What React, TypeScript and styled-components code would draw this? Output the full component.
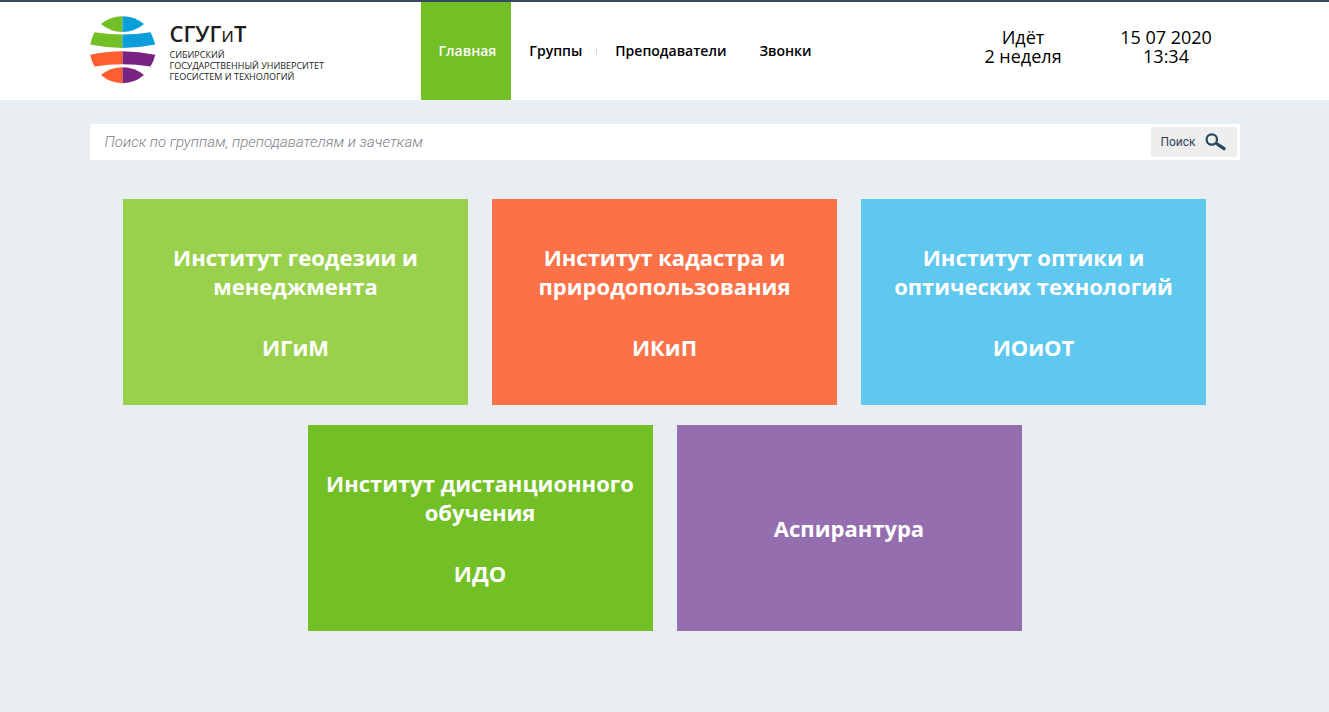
import React from 'react';
import styled, { createGlobalStyle } from 'styled-components';

const GlobalStyle = createGlobalStyle`
  *, *::before, *::after { box-sizing: border-box; }
  html { min-height: 100%; background: #e9eef2; }
  body {
    margin: 0;
    background: #e9eef2;
    color: #000;
    font-family: 'Open Sans', 'Noto Sans', sans-serif;
  }
`;

const Container = styled.div`
  width: 100%;
  max-width: 1150px;
  margin: 0 auto;
`;

const Header = styled.header`
  background: #fff;
  border-top: 2px solid #34495e;
`;

const HeaderRow = styled(Container)`
  display: flex;
  align-items: stretch;
  flex-wrap: wrap;
  min-height: 98px;
`;

const Brand = styled.a`
  display: flex;
  align-items: center;
  gap: 14px;
  width: 331px;
  padding-bottom: 2px;
  color: #1d1d1b;
  text-decoration: none;
`;

const BrandText = styled.span`
  display: flex;
  flex-direction: column;
`;

const BrandName = styled.span`
  font-size: 22px;
  line-height: 28px;
  font-weight: 600;
`;

const SmallLetter = styled.span`
  font-size: 20px;
  font-weight: 400;
`;

const BrandLine = styled.span`
  font-size: 9px;
  line-height: 11px;
  font-weight: 500;
  white-space: nowrap;
`;

const Nav = styled.nav`
  display: flex;
  align-items: stretch;
`;

const NavLink = styled.a<{ $active?: boolean; $divided?: boolean }>`
  display: flex;
  align-items: center;
  padding: 0 15px 0 18px;
  font-size: 14px;
  line-height: 20px;
  font-weight: 600;
  color: ${(p) => (p.$active ? '#fff' : '#000')};
  background: ${(p) => (p.$active ? '#72bf26' : 'transparent')};
  background-image: ${(p) =>
    p.$divided ? 'repeating-linear-gradient(#a8a8a8 0 1px, transparent 1px 2px)' : 'none'};
  background-size: 1px 5px;
  background-repeat: no-repeat;
  background-position: right center;
  text-decoration: none;
`;

const Status = styled.div`
  display: flex;
  align-items: center;
  margin-left: auto;
  padding: 0 2px 8px 0;
`;

const StatusItem = styled.p`
  width: 143px;
  margin: 0;
  text-align: center;
  font-size: 18px;
  line-height: 19px;
`;

const SearchForm = styled.form`
  display: flex;
  margin-top: 24px;
  padding: 3px;
  background: #fff;
`;

const SearchInput = styled.input`
  flex: 1;
  min-width: 0;
  height: 30px;
  padding: 0 12px;
  border: 0;
  outline: 0;
  background: transparent;
  font: 15px Roboto, sans-serif;
  color: #34495e;

  &::placeholder {
    font-style: italic;
    font-weight: 300;
    color: #7c8088;
    opacity: 1;
  }
`;

const SearchButton = styled.button`
  display: flex;
  align-items: center;
  justify-content: center;
  gap: 9px;
  width: 86px;
  height: 30px;
  padding: 0;
  border: 0;
  border-radius: 2px;
  background: #eeeeef;
  color: #34405e;
  font: 12px Roboto, sans-serif;
  cursor: pointer;
`;

const Tiles = styled.main`
  display: flex;
  flex-wrap: wrap;
  justify-content: center;
  gap: 20px 24px;
  padding: 39px 0;
`;

const Tile = styled.a<{ $color: string }>`
  display: flex;
  flex-direction: column;
  align-items: center;
  justify-content: center;
  gap: 32px;
  width: 345px;
  min-height: 206px;
  padding: 0 16px;
  background: ${(p) => p.$color};
  color: #fff;
  font-size: 22px;
  line-height: 29px;
  font-weight: 700;
  text-align: center;
  text-decoration: none;
`;

const Emblem = () => (
  <svg width="66" height="68" viewBox="0 0 66 68" aria-hidden="true">
    <defs>
      <clipPath id="west">
        <rect x="0" y="0" width="32.5" height="68" />
      </clipPath>
      <clipPath id="east">
        <rect x="32.5" y="0" width="33.5" height="68" />
      </clipPath>
      <g id="north">
        <path d="M11 8Q20 .5 32.5 .2Q45 .5 54 8Q45 15.8 32.5 16Q20 15.8 11 8Z" />
        <path d="M4.5 16.2Q32.5 21 60.5 16.2Q63.5 22 65.3 28.5Q49 31.9 32.5 31.9Q16 31.9 .2 28.5Q1.5 22 4.5 16.2Z" />
      </g>
      <g id="south">
        <path d="M.2 38.8Q16 35.2 32.5 35.2Q49 35.2 65.3 38.8Q64 45 60.5 50.6Q32.5 46 4.5 50.6Q1.5 45 .2 38.8Z" />
        <path d="M11 59Q20 51.3 32.5 51.2Q45 51.3 54 59Q45 67 32.5 67.2Q20 67 11 59Z" />
      </g>
    </defs>
    <use href="#north" fill="#72bf26" clipPath="url(#west)" />
    <use href="#north" fill="#0a9edb" clipPath="url(#east)" />
    <use href="#south" fill="#ff5e2e" clipPath="url(#west)" />
    <use href="#south" fill="#7b2382" clipPath="url(#east)" />
  </svg>
);

const Magnifier = () => (
  <svg width="22" height="18" viewBox="0 0 22 18" fill="none" stroke="#24475f" aria-hidden="true">
    <circle cx="6.8" cy="6.5" r="5.2" strokeWidth="2.2" />
    <path d="M10.8 10L14 12.2" strokeWidth="2.4" />
    <path d="M13 11.7L19 15.7" strokeWidth="3.2" strokeLinecap="round" />
  </svg>
);

const institutes = [
  { name: 'Институт геодезии и менеджмента', short: 'ИГиМ', color: '#99d14d' },
  { name: 'Институт кадастра и природопользования', short: 'ИКиП', color: '#fb7148' },
  { name: 'Институт оптики и оптических технологий', short: 'ИОиОТ', color: '#5fc8ef' },
  { name: 'Институт дистанционного обучения', short: 'ИДО', color: '#72bf26' },
  { name: 'Аспирантура', color: '#956eb0' },
];

export default function App() {
  return (
    <>
      <GlobalStyle />
      <Header>
        <HeaderRow>
          <Brand href="#">
            <Emblem />
            <BrandText>
              <BrandName>
                СГУГ<SmallLetter>и</SmallLetter>Т
              </BrandName>
              <BrandLine>СИБИРСКИЙ</BrandLine>
              <BrandLine>ГОСУДАРСТВЕННЫЙ УНИВЕРСИТЕТ</BrandLine>
              <BrandLine>ГЕОСИСТЕМ И ТЕХНОЛОГИЙ</BrandLine>
            </BrandText>
          </Brand>
          <Nav>
            <NavLink href="#" $active>Главная</NavLink>
            <NavLink href="#groups" $divided>Группы</NavLink>
            <NavLink href="#teachers">Преподаватели</NavLink>
            <NavLink href="#bells">Звонки</NavLink>
          </Nav>
          <Status>
            <StatusItem>
              Идёт
              <br />2 неделя
            </StatusItem>
            <StatusItem>
              15 07 2020
              <br />
              13:34
            </StatusItem>
          </Status>
        </HeaderRow>
      </Header>
      <Container>
        <SearchForm role="search" onSubmit={(e) => e.preventDefault()}>
          <SearchInput
            type="text"
            aria-label="Поиск по группам, преподавателям и зачеткам"
            placeholder="Поиск по группам, преподавателям и зачеткам"
          />
          <SearchButton type="submit">
            Поиск
            <Magnifier />
          </SearchButton>
        </SearchForm>
        <Tiles>
          {institutes.map((item) => (
            <Tile key={item.name} href="#" $color={item.color}>
              <span>{item.name}</span>
              {item.short && <span>{item.short}</span>}
            </Tile>
          ))}
        </Tiles>
      </Container>
    </>
  );
}
